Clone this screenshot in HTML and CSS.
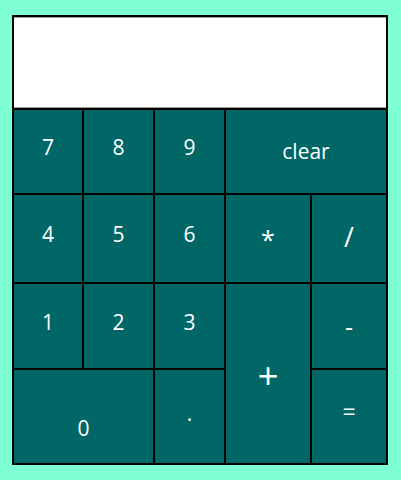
FILE: index.html
```html
<!DOCTYPE html>
<html>
<head>
<meta charset="utf-8">
<link rel="stylesheet" href="styles.css">
</head>
<body>
<div class="calc">
  <div class="display"></div>
  <button class="key key-num">7</button>
  <button class="key key-num">8</button>
  <button class="key key-num">9</button>
  <button class="key key-clear">clear</button>
  <button class="key key-num">4</button>
  <button class="key key-num">5</button>
  <button class="key key-num">6</button>
  <button class="key key-mul">*</button>
  <button class="key key-div">/</button>
  <button class="key key-num">1</button>
  <button class="key key-num">2</button>
  <button class="key key-num">3</button>
  <button class="key key-plus">+</button>
  <button class="key key-minus">-</button>
  <button class="key key-zero">0</button>
  <button class="key key-dot">.</button>
  <button class="key key-eq">=</button>
</div>
</body>
</html>
```
FILE: styles.css
```css
html, body {
  margin: 0;
  padding: 0;
  background: #7fffd4;
}
body {
  padding: 15px 12px;
}
.calc {
  width: 376px;
  box-sizing: border-box;
  background: #000;
  padding: 2px;
  display: grid;
  grid-template-columns: 68px 69px 69px 84px 74px;
  grid-template-rows: 91px 83px 87px 84px 93px;
  gap: 2px;
}
.display {
  grid-column: 1 / 6;
  background: #fff;
  border-top: 1px solid #a0a0a0;
  border-bottom: 1px solid #a0a0a0;
}
.key {
  margin: 0;
  padding: 0;
  border: 0;
  background: #006666;
  color: #fff;
  font-family: "Open Sans", "Noto Sans", sans-serif;
  font-size: 21px;
  line-height: 1;
  display: flex;
  align-items: center;
  justify-content: center;
}
.key-num { padding-bottom: 8px; }
.key-clear { grid-column: 4 / 6; padding-bottom: 1px; }
.key-mul { font-size: 25px; padding-top: 2px; }
.key-div { font-size: 27px; padding-bottom: 4px; }
.key-plus { grid-column: 4; grid-row: 4 / 6; font-size: 37px; padding-top: 2px; }
.key-minus { grid-column: 5; grid-row: 4; font-size: 25px; padding-top: 0; }
.key-zero { grid-column: 1 / 3; padding-top: 24px; }
.key-dot { grid-column: 3; padding-bottom: 7px; }
.key-eq { grid-column: 5; grid-row: 5; font-size: 23px; padding-bottom: 10px; }
```
